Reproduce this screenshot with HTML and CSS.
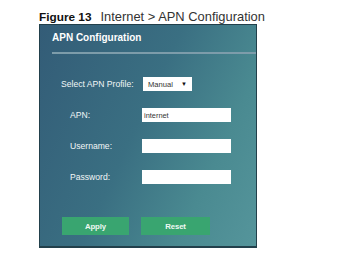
FILE: index.html
```html
<!DOCTYPE html>
<html>
<head>
<meta charset="utf-8">
<link rel="stylesheet" href="styles.css">
</head>
<body>
<div class="caption"><span class="fig">Figure 13</span><span class="title">Internet &gt; APN Configuration</span></div>
<div class="panel">
  <div class="head">APN Configuration</div>
  <div class="sep"></div>
  <div class="form">
    <div class="row first"><span class="lbl">Select APN Profile:</span><span class="select"><span>Manual</span><span class="arrow">▼</span></span></div>
    <div class="row"><span class="lbl">APN:</span><span class="input">internet</span></div>
    <div class="row"><span class="lbl">Username:</span><span class="input"></span></div>
    <div class="row"><span class="lbl">Password:</span><span class="input"></span></div>
  </div>
  <div class="buttons"><span class="btn apply">Apply</span><span class="btn reset">Reset</span></div>
</div>
</body>
</html>
```
FILE: styles.css
```css
html, body { margin: 0; padding: 0; background: #fff; }
body { width: 350px; height: 261px; overflow: hidden; font-family: "Liberation Sans", Arial, sans-serif; }
.caption { display: flex; align-items: baseline; padding: 10px 0 0 39px; height: 14px; line-height: 14px; }
.fig { font-weight: bold; font-size: 11.8px; color: #111; }
.title { font-size: 12.9px; color: #333; margin-left: 9px; }
.panel {
  margin-left: 39px; width: 216px; height: 221px;
  border: 1px solid #22404b; border-bottom-width: 2px;
  background: linear-gradient(115deg, #335c77 0%, #3a6f82 45%, #4a8a91 75%, #55959b 100%);
  box-sizing: content-box;
}
.head { color: #fff; font-weight: bold; font-size: 10px; line-height: 14px; padding: 6px 0 0 12px; }
.sep { height: 2px; background: #7d9caa; margin: 7px 0 0 12px; }
.form { display: flex; flex-direction: column; gap: 17px; margin-top: 23px; }
.row { display: flex; align-items: center; height: 14px; padding-left: 30px; color: #f2f6f7; font-size: 8.6px; }
.row .lbl { width: 72px; }
.row.first { padding-left: 21px; }
.row.first .lbl { width: 82px; }
.select { display: flex; align-items: center; justify-content: space-between; width: 49px; height: 14px; background: #fff; color: #333; font-size: 7.6px; padding: 0 5px 0 5px; box-sizing: border-box; }
.arrow { font-size: 6px; color: #111; }
.input { display: flex; align-items: center; width: 89px; height: 14px; background: #fff; color: #333; font-size: 7.4px; padding-left: 2px; box-sizing: border-box; }
.buttons { display: flex; gap: 12px; margin: 33px 0 0 22px; }
.btn { display: flex; align-items: center; justify-content: center; height: 18px; background: #39a570; color: #eef8f2; font-size: 7.8px; font-weight: 600; letter-spacing: -0.1px; }
.apply { width: 67px; }
.reset { width: 69px; }
```
